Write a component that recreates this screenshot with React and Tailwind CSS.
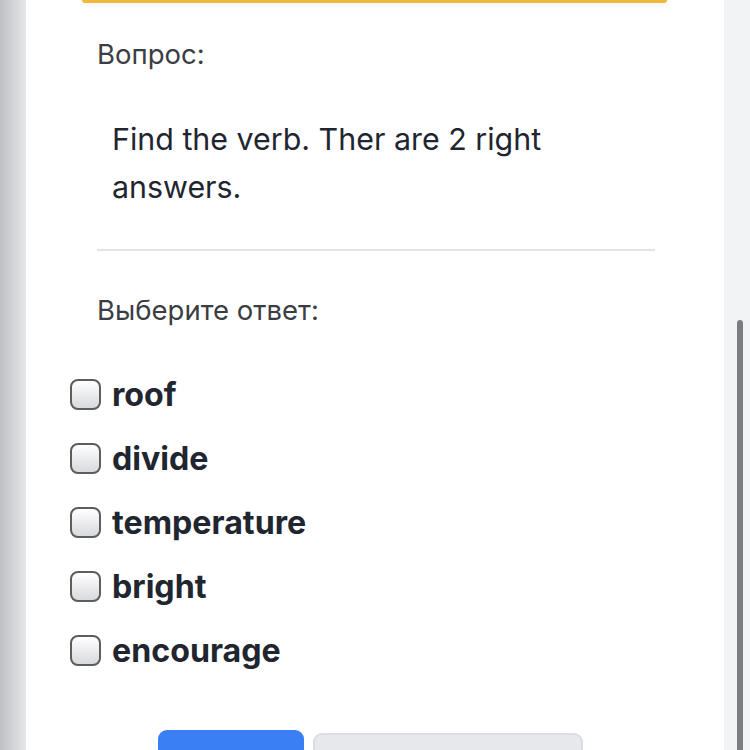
import React from 'react';

const answers = ['roof', 'divide', 'temperature', 'bright', 'encourage'];

const Checkbox = () => (
  <span className="w-[31px] h-[31px] shrink-0 rounded-[8px] border-2 border-[#5b5d61] bg-gradient-to-b from-[#ffffff] to-[#d9dadc]" />
);

export default function App() {
  return (
    <div className="h-[750px] w-[750px] flex overflow-hidden bg-white" style={{ fontFamily: 'Inter, "Noto Sans", sans-serif' }}>
      {/* left edge of the previous page */}
      <div className="w-[26px] shrink-0 bg-gradient-to-r from-[#bfc0c3] to-[#e6e7e9]" />

      <div className="flex-1 pl-[44px]">
        <div className="ml-[12px] w-[585px] h-[3px] rounded-b-[6px] bg-[#f0b93b] shadow-[0_2px_6px_rgba(0,0,0,0.08)]" />

        <div className="pl-[27px] pr-[44px]">
          <div className="mt-[34px] text-[27.5px] leading-[34px] text-[#3a3d42]">Вопрос:</div>

          <p className="mt-[44px] pl-[15px] pr-[80px] text-[30.4px] leading-[48px] text-[#1f2630]">
            Find the verb. Ther are 2 right answers.
          </p>

          <div className="mt-[38px] h-[2px] bg-[#e3e4e6] w-[558px]" />

          <div className="mt-[42px] text-[27.5px] leading-[34px] text-[#3a3d42]">Выберите ответ:</div>
        </div>

        <div className="mt-[52px] flex flex-col gap-[33px]">
          {answers.map((a) => (
            <label key={a} className="flex items-center gap-[11px]">
              <Checkbox />
              <span className="text-[32.2px] leading-[31px] font-bold text-[#1f2630]">{a}</span>
            </label>
          ))}
        </div>

        <div className="mt-[64px] flex gap-[9px] pl-[88px] items-start">
          <div className="w-[146px] h-[40px] rounded-t-[9px] bg-[#3b7ff4]" />
          <div className="mt-[3px] w-[270px] h-[40px] rounded-t-[9px] bg-[#e6e8eb] border-2 border-[#dcdde0]" />
        </div>
      </div>

      {/* scrollbar area */}
      <div className="w-[26px] shrink-0 bg-[#f2f3f5] relative">
        <div className="absolute left-[13px] top-[320px] w-[6px] h-[440px] rounded-full bg-[#7b7c7f]" />
      </div>
    </div>
  );
}
